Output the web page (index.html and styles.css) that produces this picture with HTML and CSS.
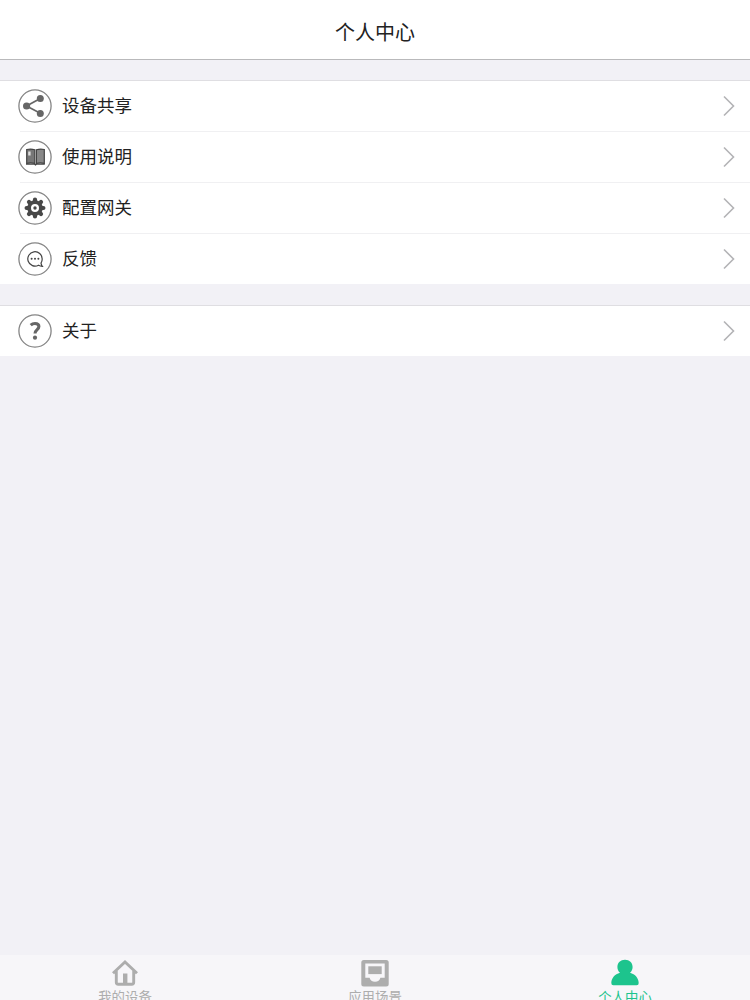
FILE: index.html
```
<!DOCTYPE html>
<html lang="zh-CN">
<head>
    <meta charset="UTF-8">
    <meta name="viewport" content="width=device-width, initial-scale=1.0">
    <title>个人中心</title>
    <link rel="stylesheet" href="styles.css">
</head>
<body>
    <header class="navbar">
        <h1>个人中心</h1>
    </header>

    <main class="content">
        <ul class="menu">
            <li class="menu-item">
                <svg class="icon" viewBox="0 0 34 34">
                    <circle class="ring" cx="17" cy="17" r="16.1"/>
                    <path d="M22.3 9.5L8.5 17l13.8 7.3" fill="none" stroke="#666" stroke-width="1.7"/>
                    <circle cx="22.3" cy="9.5" r="3.5" fill="#666"/>
                    <circle cx="8.6" cy="17" r="3.6" fill="#666"/>
                    <circle cx="22.3" cy="24.4" r="3.5" fill="#666"/>
                </svg>
                <span class="label">设备共享</span>
                <svg class="arrow" viewBox="0 0 12 22"><path d="M1 1.5l9.5 9.5L1 20.5"/></svg>
            </li>
            <li class="menu-item">
                <svg class="icon" viewBox="0 0 34 34">
                    <circle class="ring" cx="17" cy="17" r="16.1"/>
                    <path d="M8.7 9.5q4.2-1 8.1.2v13.6q-4.1-.8-8.1 0z" fill="#777" stroke="#444" stroke-width="1.2"/>
                    <path d="M18.4 9.7q4-1.2 7.9-.2v13.8q-4-.8-7.9 0z" fill="#888" stroke="#444" stroke-width="1.2"/>
                    <path d="M8 24.2h8.7l.8.7.8-.7h8.5" fill="none" stroke="#444" stroke-width="1.3"/>
                    <rect x="10.2" y="11.5" width="2.4" height="4" fill="#ddd"/>
                </svg>
                <span class="label">使用说明</span>
                <svg class="arrow" viewBox="0 0 12 22"><path d="M1 1.5l9.5 9.5L1 20.5"/></svg>
            </li>
            <li class="menu-item">
                <svg class="icon" viewBox="0 0 34 34">
                    <circle class="ring" cx="17" cy="17" r="16.1"/>
                    <g stroke="#484848" stroke-width="4.2" stroke-linecap="round">
                        <path d="M17 8.6v16.8M8.6 17h16.8M11 11l12 12M23 11L11 23"/>
                    </g>
                    <circle cx="17" cy="17" r="5.9" fill="#fff" stroke="#484848" stroke-width="3.8"/>
                    <circle cx="17" cy="17" r="1.7" fill="#484848"/>
                </svg>
                <span class="label">配置网关</span>
                <svg class="arrow" viewBox="0 0 12 22"><path d="M1 1.5l9.5 9.5L1 20.5"/></svg>
            </li>
            <li class="menu-item">
                <svg class="icon" viewBox="0 0 34 34">
                    <circle class="ring" cx="17" cy="17" r="16.1"/>
                    <path d="M20.5 23.2A7.2 7.2 0 1 1 24.2 17c0 1.9-.5 3.2-1.2 4.2.2 1.2.6 2.3 1.3 3.1-1.4-.1-2.7-.5-3.8-1.1z" fill="none" stroke="#444" stroke-width="1.2"/>
                    <g fill="#444">
                        <circle cx="13.6" cy="16.7" r="1"/>
                        <circle cx="17" cy="16.7" r="1"/>
                        <circle cx="20.4" cy="16.7" r="1"/>
                    </g>
                </svg>
                <span class="label">反馈</span>
                <svg class="arrow" viewBox="0 0 12 22"><path d="M1 1.5l9.5 9.5L1 20.5"/></svg>
            </li>
        </ul>

        <ul class="menu">
            <li class="menu-item">
                <svg class="icon" viewBox="0 0 34 34">
                    <circle class="ring" cx="17" cy="17" r="16.1"/>
                    <path d="M12.7 11.2c1.3-1.2 2.7-1.7 4.3-1.7 2.4 0 3.9 1.1 3.9 3.1 0 3-3.9 3-3.9 6.9" fill="none" stroke="#666" stroke-width="3.1"/>
                    <circle cx="17" cy="23.7" r="2.1" fill="#666"/>
                </svg>
                <span class="label">关于</span>
                <svg class="arrow" viewBox="0 0 12 22"><path d="M1 1.5l9.5 9.5L1 20.5"/></svg>
            </li>
        </ul>
    </main>

    <nav class="tabbar">
        <div class="tab">
            <svg class="tab-icon" viewBox="0 0 28 28">
                <path d="M2 14.3L14 3l12 11.3M5.3 12v11.2q0 2 2 2h13.4q2 0 2-2V12" fill="none" stroke="currentColor" stroke-width="2.9"/>
                <path d="M12 14.5h4.4V25H12z" fill="currentColor"/>
            </svg>
            <span>我的设备</span>
        </div>
        <div class="tab">
            <svg class="tab-icon" viewBox="0 0 28 28">
                <rect x=".3" y="1" width="27.4" height="26.5" rx="2.5" fill="currentColor"/>
                <path d="M4.3 4.5h19.4v14.2h-4.3q-1 4-5.4 4t-5.4-4H4.3z" fill="#f7f6f9"/>
                <path d="M7.3 7.3h13.4v7.8H7.3z" fill="currentColor"/>
            </svg>
            <span>应用场景</span>
        </div>
        <div class="tab active">
            <svg class="tab-icon" viewBox="0 0 28 28">
                <path d="M14 .8c4.5 0 7.6 3.1 7.6 7.2 0 2.5-1 4.5-2.6 5.8 5.3 1.6 8.5 5.1 8.7 10.2q0 2.2-2 2.2H2.3q-2 0-2-2.2c.2-5.1 3.4-8.6 8.7-10.2C7.4 12.5 6.4 10.5 6.4 8c0-4.1 3.1-7.2 7.6-7.2z" fill="currentColor"/>
            </svg>
            <span>个人中心</span>
        </div>
    </nav>
</body>
</html>
```

FILE: styles.css
```
* {
    box-sizing: border-box;
}

body {
    display: flex;
    flex-direction: column;
    height: 100vh;
    margin: 0;
    overflow: hidden;
    font-family: "Liberation Sans", "Noto Sans CJK SC", sans-serif;
    background-color: #f2f1f6;
    color: #222;
}

.navbar {
    display: flex;
    justify-content: center;
    height: 60px;
    padding-top: 18px;
    background-color: #fff;
    border-bottom: 1px solid #b9b9bb;
}

h1 {
    margin: 0;
    font-size: 20px;
    line-height: 30px;
    font-weight: 400;
}

.content {
    flex: 1;
    padding-top: 20px;
}

.menu {
    list-style: none;
    margin: 0 0 21px;
    padding: 0;
    background-color: #fff;
    border-top: 1px solid #dfdee2;
}

.menu-item {
    display: flex;
    align-items: center;
    height: 51px;
    padding: 0 15px 1px 18px;
    background: linear-gradient(#f0f0f2, #f0f0f2) 20px 100% / 100% 1px no-repeat;
}

.menu-item:last-child {
    height: 50px;
    padding-bottom: 0;
    background: none;
}

.icon {
    width: 34px;
    height: 34px;
}

.ring {
    fill: none;
    stroke: #858585;
    stroke-width: 1.3;
}

.label {
    flex: 1;
    margin-left: 10px;
    font-size: 17.5px;
    line-height: 26px;
}

.arrow {
    width: 12px;
    height: 22px;
    fill: none;
    stroke: #b3b3b6;
    stroke-width: 1.6;
}

.tabbar {
    display: flex;
    height: 45px;
    background-color: #f7f6f9;
}

.tab {
    flex: 1;
    display: flex;
    flex-direction: column;
    align-items: center;
    padding-top: 4px;
    color: #adadad;
    font-size: 13.4px;
    line-height: 22px;
}

.tab-icon {
    flex: none;
    width: 28px;
    height: 28px;
}

.tab.active {
    color: #1dc48d;
}
```
